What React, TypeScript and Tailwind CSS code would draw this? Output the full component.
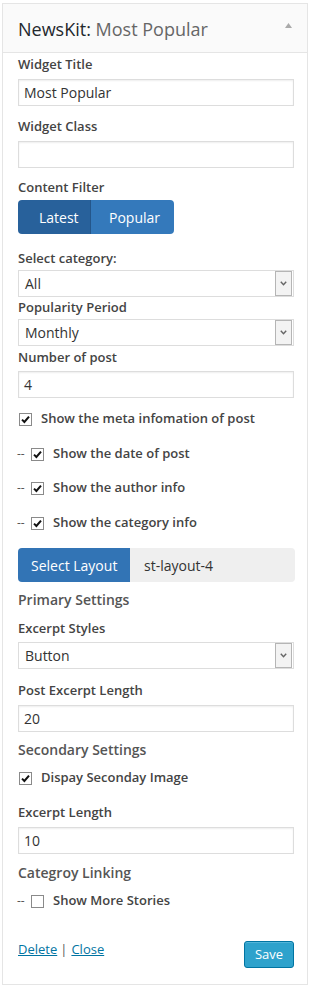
import React from 'react';

const Label = ({ children, className = '' }: { children: React.ReactNode; className?: string }) => (
  <div className={`text-[13px] leading-[18px] font-semibold text-[#444] ${className}`}>{children}</div>
);

const Heading = ({ children, className = '' }: { children: React.ReactNode; className?: string }) => (
  <div className={`text-[14px] leading-[20px] font-semibold text-[#555] ${className}`}>{children}</div>
);

const TextInput = ({ value, className = '' }: { value: string; className?: string }) => (
  <div
    className={`w-[276px] h-[27px] border border-[#ddd] bg-white shadow-[inset_0_1px_2px_rgba(0,0,0,0.07)] pl-[5px] flex items-center text-[14px] text-[#333] ${className}`}
  >
    {value}
  </div>
);

const Select = ({ value, className = '' }: { value: string; className?: string }) => (
  <div
    className={`relative w-[276px] h-[27px] border border-[#ddd] bg-white pl-[6px] flex items-center text-[14px] text-[#333] ${className}`}
  >
    {value}
    <div className="absolute right-[1px] top-[0px] bottom-[0px] w-[17px] border border-[#b5b5b5] bg-[#f3f3f3] flex items-center justify-center">
      <svg width="7" height="5" viewBox="0 0 7 5">
        <path d="M0.8 0.8 L3.5 3.8 L6.2 0.8" fill="none" stroke="#666" strokeWidth="1.4" />
      </svg>
    </div>
  </div>
);

const Checkbox = ({ checked }: { checked: boolean }) => (
  <div className="w-[13px] h-[13px] border border-[#8a8a8a] bg-white flex items-center justify-center shrink-0">
    {checked && (
      <svg width="11" height="11" viewBox="0 0 11 11">
        <path d="M2 5.6 L4.4 8 L9 2.6" fill="none" stroke="#111" strokeWidth="2" />
      </svg>
    )}
  </div>
);

const CheckRow = ({
  label,
  checked = true,
  nested = false,
  className = '',
}: {
  label: string;
  checked?: boolean;
  nested?: boolean;
  className?: string;
}) => (
  <div className={`flex items-center h-[18px] ${className}`}>
    {nested ? (
      <span className="-ml-[1px] w-[14px] text-[12px] text-[#555] leading-[18px]">--</span>
    ) : (
      <span className="w-[1px]" />
    )}
    <Checkbox checked={checked} />
    <span className="ml-[9px] text-[13px] font-semibold text-[#444]">{label}</span>
  </div>
);

export default function App() {
  return (
    <div className="w-[314px] h-[988px] bg-white font-['Open_Sans',sans-serif] pt-[3px]">
      <div className="ml-[2px] w-[306px] border border-[#e5e5e5] bg-white">
        {/* header */}
        <div className="h-[49px] bg-[#fafafa] border-b border-[#e5e5e5] flex items-center justify-between pl-[15px] pr-[15px]">
          <div className="text-[18px] leading-[24px] mt-[1px]">
            <span className="text-[#23282d]">NewsKit:</span>
            <span className="text-[#666]"> Most Popular</span>
          </div>
          <svg width="7" height="5" viewBox="0 0 7 5" className="-mt-[6px]">
            <path d="M0 5 L3.5 0 L7 5 Z" fill="#aaa" />
          </svg>
        </div>

        {/* body */}
        <div className="pl-[15px] pb-[16px]">
          <Label className="mt-[2px]">Widget Title</Label>
          <TextInput value="Most Popular" className="mt-[6px]" />

          <Label className="mt-[11px]">Widget Class</Label>
          <TextInput value="" className="mt-[6px]" />

          <Label className="mt-[10px]">Content Filter</Label>
          <div className="mt-[4px] flex w-[156px] h-[34px] rounded-[4px] overflow-hidden text-[14px] text-white">
            <div className="w-[73px] bg-[#28619b] pl-[21px] flex items-center border-r border-[#24568a]">Latest</div>
            <div className="flex-1 bg-[#3479bb] pl-[18px] flex items-center">Popular</div>
          </div>

          <Label className="mt-[15px]">Select category:</Label>
          <Select value="All" className="mt-[3px]" />

          <Label className="mt-[1px]">Popularity Period</Label>
          <Select value="Monthly" className="mt-[3px]" />

          <Label className="mt-[2px]">Number of post</Label>
          <TextInput value="4" className="mt-[5px]" />

          <CheckRow label="Show the meta infomation of post" className="mt-[12px]" />
          <CheckRow label="Show the date of post" nested className="mt-[17px]" />
          <CheckRow label="Show the author info" nested className="mt-[16px]" />
          <CheckRow label="Show the category info" nested className="mt-[17px]" />

          <div className="mt-[16px] flex w-[277px] h-[34px] rounded-[4px] overflow-hidden text-[14px]">
            <div className="w-[112px] bg-[#3274b5] text-white pl-[13px] flex items-center">Select Layout</div>
            <div className="flex-1 bg-[#efefef] text-[#333] pl-[14px] flex items-center">st-layout-4</div>
          </div>

          <Heading className="mt-[8px]">Primary Settings</Heading>
          <Label className="mt-[9px]">Excerpt Styles</Label>
          <Select value="Button" className="mt-[5px]" />

          <Label className="mt-[12px]">Post Excerpt Length</Label>
          <TextInput value="20" className="mt-[6px]" />

          <Heading className="mt-[8px]">Secondary Settings</Heading>
          <CheckRow label="Dispay Seconday Image" className="mt-[9px]" />

          <Label className="mt-[16px]">Excerpt Length</Label>
          <TextInput value="10" className="mt-[6px]" />

          <Heading className="mt-[9px]">Categroy Linking</Heading>
          <CheckRow label="Show More Stories" nested checked={false} className="mt-[9px]" />

          {/* footer */}
          <div className="mt-[30px] w-[276px] flex justify-between items-start">
            <div className="text-[13px] leading-[18px] text-[#555]">
              <a href="#" className="text-[#0074a2] underline">Delete</a>
              <span className="ml-[3px] mr-[4px]">|</span>
              <a href="#" className="text-[#0074a2] underline">Close</a>
            </div>
            <button className="mt-[1px] w-[50px] h-[27px] rounded-[3px] bg-[#2ea2cc] border border-[#0074a2] text-white text-[13px] shadow-[inset_0_1px_0_rgba(120,200,230,0.5)]">
              Save
            </button>
          </div>
        </div>
      </div>
    </div>
  );
}
